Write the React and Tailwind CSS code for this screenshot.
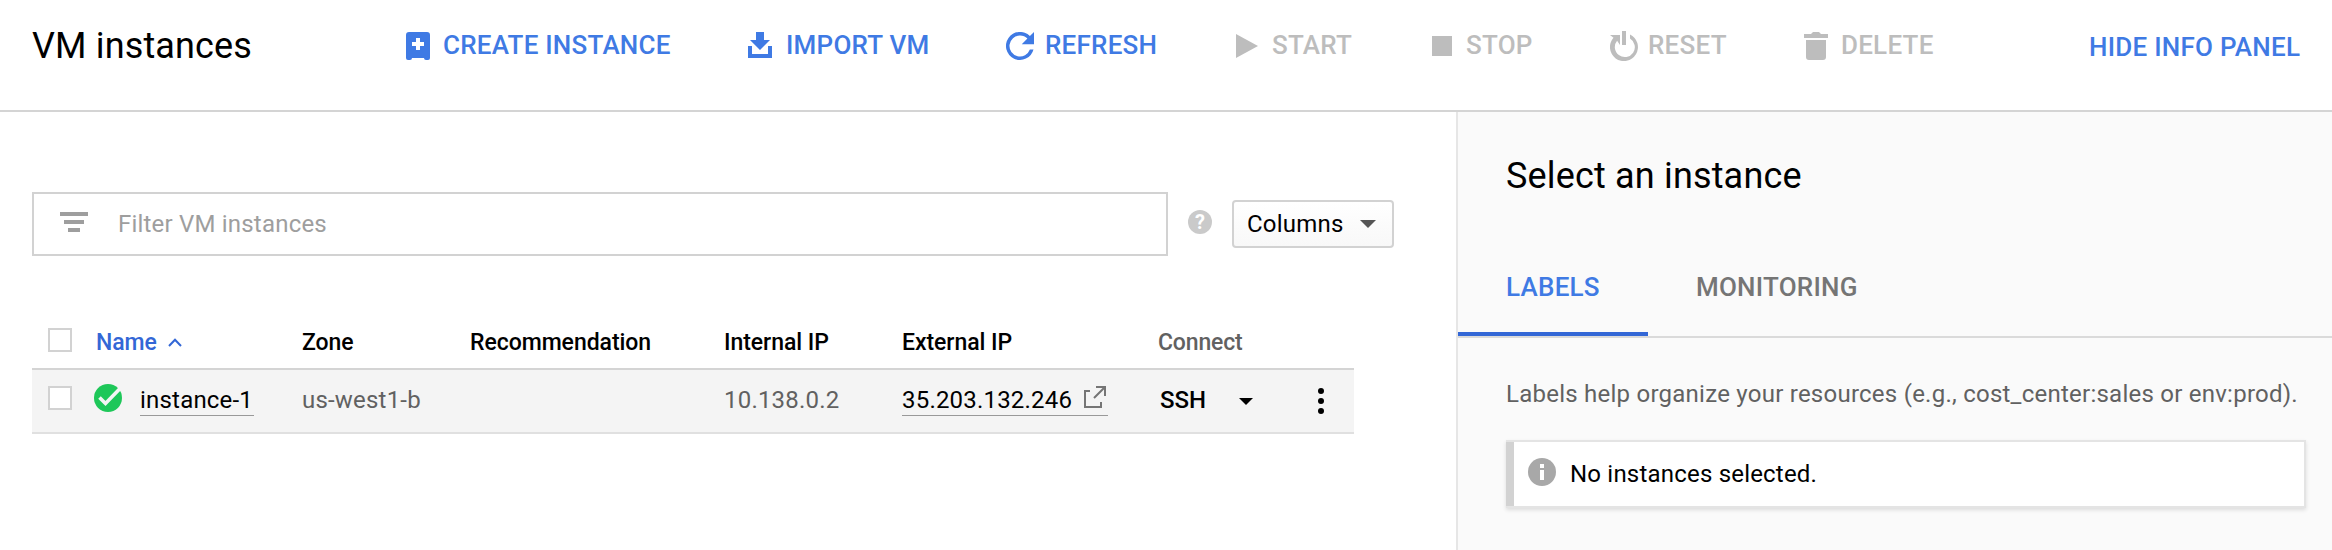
const S = ({ w, h, c = "", children }) => (
  <svg width={w} height={h} viewBox={`0 0 ${w} ${h}`} className={`block shrink-0 ${c}`} fill="currentColor">
    {children}
  </svg>
);

const CreateIcon = () => (
  <S w={24} h={28}>
    <path fillRule="evenodd" d="M3 0h18a3 3 0 0 1 3 3v23a2 2 0 0 1-2 2h-2a2 2 0 0 1-2-2H6a2 2 0 0 1-2 2H2a2 2 0 0 1-2-2V3a3 3 0 0 1 3-3zM10 6v4H6v4h4v4h4v-4h4v-4h-4V6z" />
  </S>
);
const ImportIcon = () => (
  <S w={24} h={28}>
    <path d="M8 0h8v8h6L12 18 2 8h6zM0 14h4v8h16v-8h4v12H0z" />
  </S>
);
const RefreshIcon = () => (
  <S w={28} h={28}>
    <path d="M23.900 4.100A14 14 0 1 0 27.500 17.500h-3.640A10.500 10.500 0 1 1 14 3.500c2.900 0 5.500 1.200 7.400 3.100L15.750 12.250H28V0z" />
  </S>
);
const StartIcon = () => <S w={22} h={28}><path d="M0 2v24l22-12z" /></S>;
const StopIcon = () => <S w={20} h={28}><path d="M0 4h20v20H0z" /></S>;
const ResetIcon = () => (
  <S w={28} h={30}>
    <path d="M12 0h4v14h-4z" />
    <path d="M0 4h10v10L7.100 9.700A10 10 0 1 0 20 7.500V3.500A14 14 0 1 1 3.500 6.800z" />
  </S>
);
const DeleteIcon = () => (
  <S w={24} h={28}>
    <path d="M0 2h7l2-2h6l2 2h7v4H0zM2 8h20v17a3 3 0 0 1-3 3H5a3 3 0 0 1-3-3z" />
  </S>
);

const actions = [
  { label: "CREATE INSTANCE", Icon: CreateIcon, box: "w-[342px]", gap: "gap-[13px]", on: true },
  { label: "IMPORT VM", Icon: ImportIcon, box: "w-[258px]", gap: "gap-[14px]", on: true },
  { label: "REFRESH", Icon: RefreshIcon, box: "w-[230px]", gap: "gap-[11px]", on: true },
  { label: "START", Icon: StartIcon, box: "w-[196px]", gap: "gap-[14px]" },
  { label: "STOP", Icon: StopIcon, box: "w-[178px]", gap: "gap-[14px]" },
  { label: "RESET", Icon: ResetIcon, box: "w-[194px]", gap: "gap-[10px]" },
  { label: "DELETE", Icon: DeleteIcon, box: "w-[285px]", gap: "gap-[13px]" },
];

const Checkbox = () => <span className="block size-6 shrink-0 border-2 border-[#d2d2d2] bg-white" />;

const cols = "grid grid-cols-[48px_206px_168px_254px_178px_256px_144px_68px]";

export default function App() {
  return (
    <div className="flex h-[550px] w-[2332px] flex-col overflow-hidden whitespace-nowrap bg-white font-['Roboto',sans-serif] text-[24px] leading-[28px] tracking-[0.2px] text-black">
      <header className="flex h-[112px] shrink-0 items-start border-b-2 border-[#d4d4d4] pl-8">
        <h1 className="mt-[24px] w-[374px] text-[36px] leading-[44px] tracking-[0.15px]">VM instances</h1>
        {actions.map(({ label, Icon, box, gap, on }) => (
          <button key={label} className={`mt-[30px] flex h-[32px] shrink-0 items-center ${box} ${gap} ${on ? "text-[#3f7ae4]" : "text-[#bdbdbd]"}`}>
            <Icon />
            <span className="-mt-[2px] text-[26px] font-medium leading-[30px] tracking-[0.23px]">{label}</span>
          </button>
        ))}
        <button className="mt-[32px] text-[26px] font-medium leading-[30px] tracking-[0.25px] text-[#3f7ae4]">HIDE INFO PANEL</button>
      </header>

      <div className="flex grow">
        <main className="w-[1456px] shrink-0 pl-8 pt-20">
          <div className="flex h-16 items-center">
            <div className="flex h-16 w-[1136px] items-center border-2 border-[#d2d2d2] pl-[26px] text-[#9e9e9e]">
              <S w={28} h={20} c="-mt-1"><path d="M0 0h28v4H0zM4 8h20v4H4zM8 16h12v4H8z" /></S>
              <span className="ml-[30px]">Filter VM instances</span>
            </div>
            <span className="-mt-1 ml-5 flex size-6 items-center justify-center rounded-full bg-[#cacaca] text-[20px] font-bold leading-6 tracking-normal text-white">?</span>
            <button className="ml-5 flex h-12 w-[162px] items-center rounded-[4px] border-2 border-[#d2d2d2] bg-gradient-to-b from-white to-[#f8f8f8] pl-[13px]">
              <span>Columns</span>
              <S w={16} h={8} c="ml-auto mr-4 text-[#555]"><path d="M0 0h16L8 8z" /></S>
            </button>
          </div>

          <section className="mt-[56px] w-[1322px]">
            <div className={`${cols} h-[58px] border-b-2 border-[#d4d4d4] pt-4 text-[23px] font-medium leading-[30px] tracking-[-0.05px]`}>
              <span className="pl-4"><Checkbox /></span>
              <span className="flex items-start pl-4 text-[#3367d6]">
                Name
                <S w={14} h={9} c="ml-[11px] mt-[10px]"><path d="M1 8l6-6.300L13 8" fill="none" stroke="currentColor" strokeWidth="2" /></S>
              </span>
              <span className="pl-4">Zone</span>
              <span className="pl-4">Recommendation</span>
              <span className="pl-4">Internal IP</span>
              <span className="pl-4">External IP</span>
              <span className="pl-4 tracking-[-0.15px] text-[#616161]">Connect</span>
            </div>
            <div className={`${cols} h-16 border-b-2 border-[#e0e0e0] bg-[#f4f4f4] pt-4`}>
              <span className="pl-4"><Checkbox /></span>
              <span className="-mt-[2px] flex items-start pl-[14px]">
                <S w={28} h={28} c="text-[#1ec759]">
                  <circle cx="14" cy="14" r="14" />
                  <path d="M5.500 13.500l6 6L26 4.500" fill="none" stroke="#f4f4f4" strokeWidth="3.600" />
                </S>
                <span className="ml-[18px] mt-[2px] h-[30px] w-[114px] border-b border-[#999]">instance-1</span>
              </span>
              <span className="pl-4 text-[#616161]">us-west1-b</span>
              <span />
              <span className="pl-4 text-[#616161]">10.138.0.2</span>
              <span className="pl-4">
                <span className="flex h-[30px] w-[206px] items-start justify-between border-b border-[#999]">
                  35.203.132.246
                  <S w={22} h={24} c="mr-[2px] text-[#757575]"><path d="M6 5H1v16h16v-5M12 1h9v9M21 1L10 12" fill="none" stroke="currentColor" strokeWidth="2" /></S>
                </span>
              </span>
              <span className="flex items-start pl-[18px] font-medium tracking-normal">
                SSH
                <S w={14} h={7} c="ml-[33px] mt-[12px]"><path d="M0 0h14L7 7z" /></S>
              </span>
              <S w={6} h={26} c="ml-[32px] mt-[2px]"><circle cx="3" cy="3" r="3" /><circle cx="3" cy="13" r="3" /><circle cx="3" cy="23" r="3" /></S>
            </div>
          </section>
        </main>

        <aside className="grow border-l-2 border-[#e6e6e6] bg-[#fafafa]">
          <h2 className="ml-12 mt-[42px] text-[36px] leading-[44px] tracking-[0.17px]">Select an instance</h2>
          <nav className="mt-[66px] flex h-[74px] items-start border-b-2 border-[#dadada] text-[26px] font-medium leading-[30px] tracking-[0.23px]">
            <span className="h-[72px] w-[190px] border-b-4 border-[#3367d6] pl-12 text-[#3f7ae4]">
              <span className="block pt-[8px]">LABELS</span>
            </span>
            <span className="pl-12 pt-[8px] text-[#757575]">MONITORING</span>
          </nav>
          <p className="ml-12 mt-[42px] tracking-[0.245px] text-[#616161]">Labels help organize your resources (e.g., cost_center:sales or env:prod).</p>
          <div className="ml-12 mt-8 flex h-[68px] w-[800px] border-y-2 border-r-2 border-[#e4e4e4] bg-white shadow-[0_2px_4px_rgba(0,0,0,0.12)]">
            <span className="w-2 bg-[#d2d2d2]" />
            <S w={28} h={28} c="ml-[14px] mt-4 text-[#a8a8a8]">
              <circle cx="14" cy="14" r="14" />
              <path d="M12 6h4v4h-4zM12 12h4v10h-4z" fill="#fff" />
            </S>
            <span className="ml-[14px] mt-[18px]">No instances selected.</span>
          </div>
        </aside>
      </div>
    </div>
  );
}
